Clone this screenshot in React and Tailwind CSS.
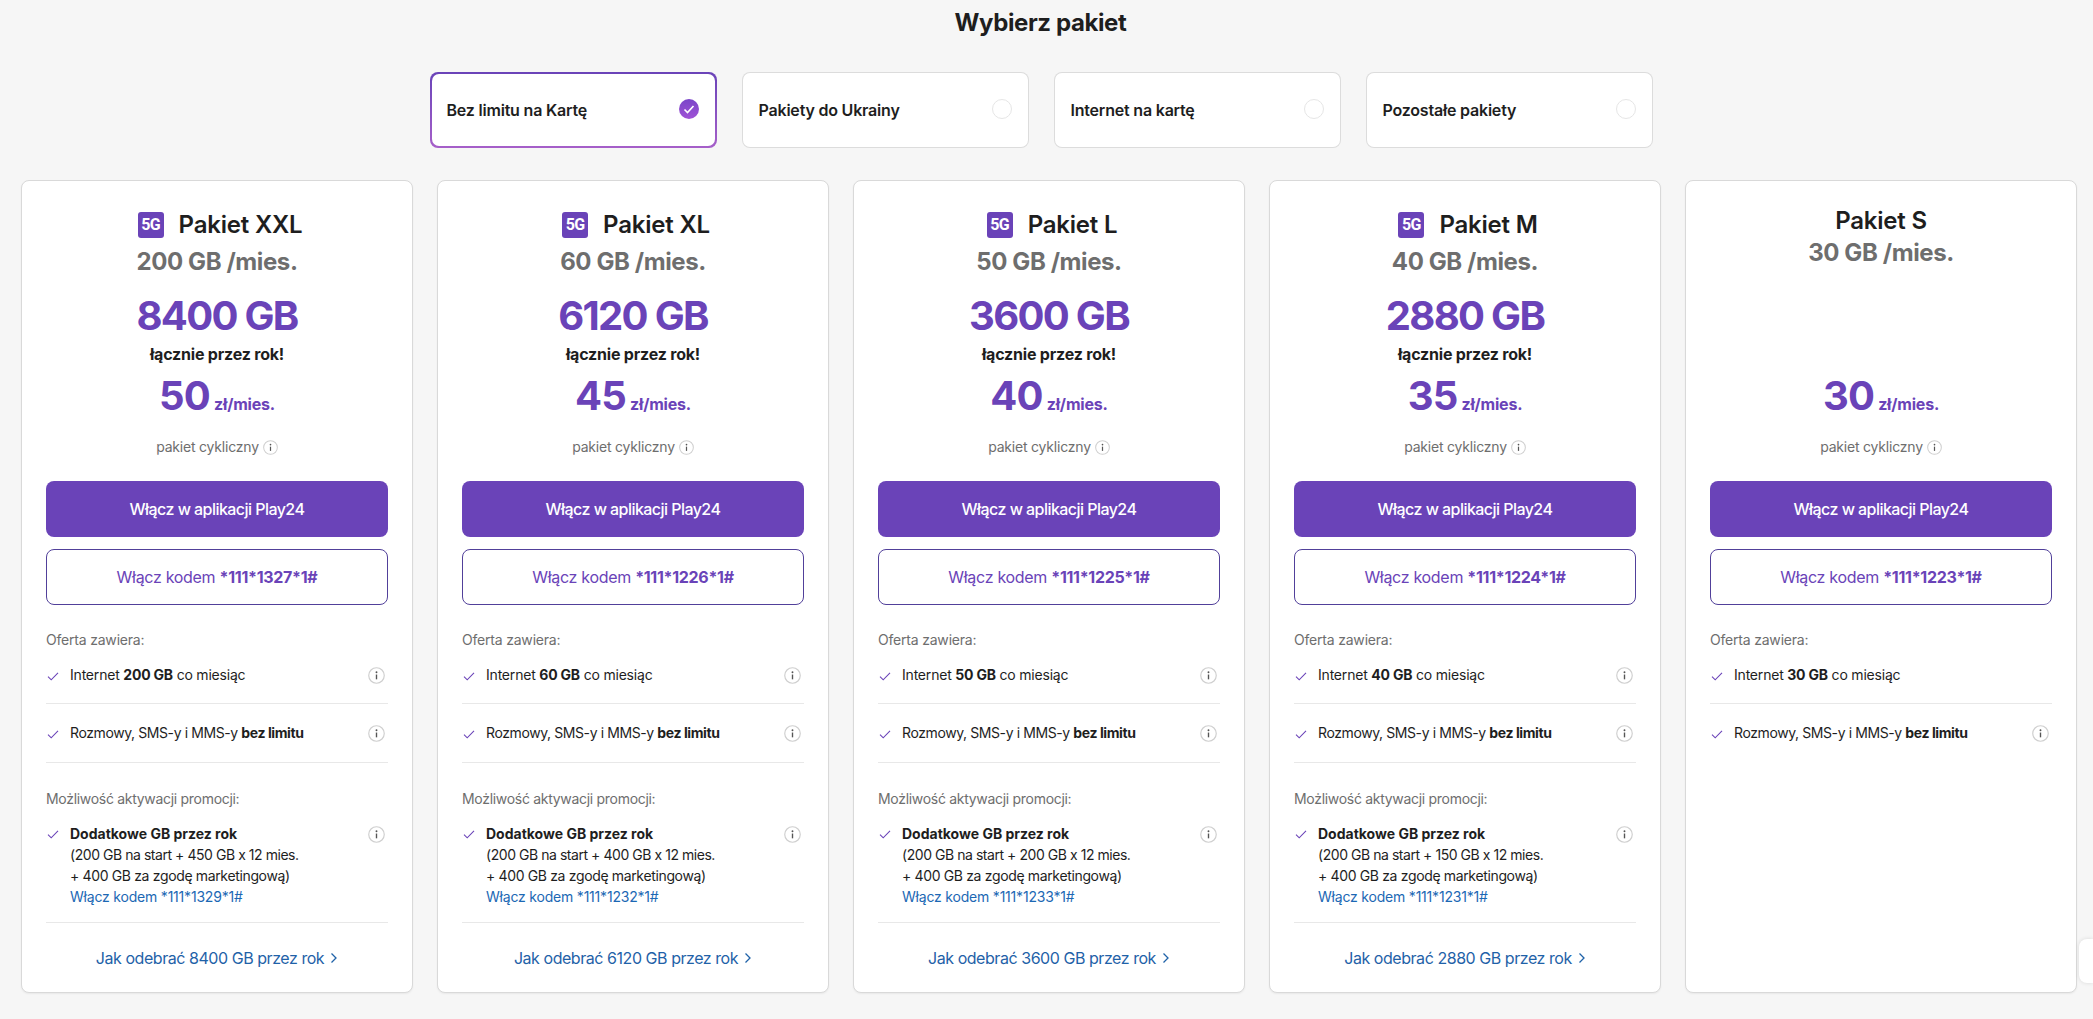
import React from 'react';

const plans = [
  { name: 'Pakiet XXL', gb: 200, total: 8400, price: 50, code: '*111*1327*1#', extra: '450', promo: '*111*1329*1#' },
  { name: 'Pakiet XL', gb: 60, total: 6120, price: 45, code: '*111*1226*1#', extra: '400', promo: '*111*1232*1#' },
  { name: 'Pakiet L', gb: 50, total: 3600, price: 40, code: '*111*1225*1#', extra: '200', promo: '*111*1233*1#' },
  { name: 'Pakiet M', gb: 40, total: 2880, price: 35, code: '*111*1224*1#', extra: '150', promo: '*111*1231*1#' },
  { name: 'Pakiet S', gb: 30, price: 30, code: '*111*1223*1#' },
];

const tabs = ['Bez limitu na Kartę', 'Pakiety do Ukrainy', 'Internet na kartę', 'Pozostałe pakiety'];

function InfoIcon({ small }) {
  return (
    <svg className={small ? 'w-[15px] h-[15px] shrink-0' : 'w-[17px] h-[17px] shrink-0'} viewBox="0 0 16 16" fill="none">
      <circle cx="8" cy="8" r="7.3" stroke="#cfcfcf" strokeWidth="1.1" />
      <circle cx="8" cy="4.9" r="0.9" fill="#555" />
      <path d="M8 7.1v4.5" stroke="#555" strokeWidth="1.3" />
    </svg>
  );
}

function Check() {
  return (
    <svg className="w-[12px] h-[12px] shrink-0 mt-[5px] ml-[1px] mr-[11px]" viewBox="0 0 12 12" fill="none">
      <path d="M1 6.6l3.2 3.2L11 2.8" stroke="#6a43b8" strokeWidth="1.1" />
    </svg>
  );
}

function Tab({ label, active }) {
  return (
    <div className={`w-[287px] h-[76px] rounded-lg ${active ? 'p-[2px] bg-gradient-to-b from-[#6a43b8] to-[#a65fc9]' : 'p-[1px] bg-[#dcdcdc]'}`}>
      <div className={`h-full bg-white rounded-[7px] flex items-center justify-between pr-[16px] ${active ? 'pl-[15px]' : 'pl-[16px]'}`}>
        <span className="text-base font-semibold tracking-[-0.2px] text-[#1e1e1e]">{label}</span>
        {active ? (
          <span className="mb-[2px] w-5 h-5 rounded-full bg-gradient-to-b from-[#7a45c8] to-[#a052d6] flex items-center justify-center">
            <svg className="w-3 h-3" viewBox="0 0 12 12" fill="none">
              <path d="M1.5 6.5l3 3L10.5 3" stroke="white" strokeWidth="1.6" />
            </svg>
          </span>
        ) : (
          <span className="mb-[2px] w-5 h-5 rounded-full border border-[#e6e6e6]" />
        )}
      </div>
    </div>
  );
}

function Plan({ plan }) {
  const has5g = !!plan.total;
  return (
    <div className="bg-white border border-[#d9d9d9] rounded-lg px-6 flex flex-col shadow-[0_1px_2px_rgba(0,0,0,0.06)]">
      <div className="h-[191px] text-center">
        {has5g ? (
          <>
            <div className="mt-[28px] pl-[6px] h-8 flex items-center justify-center gap-[15px]">
              <span className="w-[26px] h-[26px] rounded-[3px] bg-[#6a43b8] text-white text-[16px] font-bold tracking-[-0.6px] font-['Roboto',sans-serif] flex items-center justify-center">5G</span>
              <span className="text-2xl font-semibold tracking-[-0.2px] text-[#1e1e1e]">{plan.name}</span>
            </div>
            <div className="mt-[5px] text-2xl leading-8 font-bold tracking-[-0.4px] text-[#6e6e6e]">{plan.gb} GB /mies.</div>
            <div className="mt-[14px] text-[40px] leading-[48px] font-bold tracking-[-1.7px] text-[#6a43b8]">{plan.total} GB</div>
            <div className="mt-[2px] text-base leading-6 font-bold tracking-[-0.2px] text-[#1e1e1e]">łącznie przez rok!</div>
          </>
        ) : (
          <>
            <div className="mt-[24px] h-8 flex items-center justify-center text-2xl font-semibold tracking-[-0.2px] text-[#1e1e1e]">{plan.name}</div>
            <div className="text-2xl leading-8 font-bold tracking-[-0.4px] text-[#6e6e6e]">{plan.gb} GB /mies.</div>
          </>
        )}
      </div>

      <div className="h-[48px] flex items-baseline justify-center gap-[4px] text-[#6a43b8]">
        <span className="text-[40px] leading-[48px] font-bold tracking-[-0.8px]">{plan.price}</span>
        <span className="text-base font-bold tracking-[-0.2px]">zł/mies.</span>
      </div>

      <div className="mt-[17px] h-5 flex items-center justify-center gap-[4px] text-sm text-[#6e6e6e] tracking-[-0.2px]">
        pakiet cykliczny <InfoIcon small />
      </div>

      <button className="mt-[24px] h-14 rounded-lg bg-[#6a43b8] text-white text-base font-medium tracking-[-0.55px]">Włącz w aplikacji Play24</button>
      <button className="mt-3 h-14 rounded-lg border border-[#51409a] bg-white text-[#6a43b8] text-base tracking-[-0.3px]">
        Włącz kodem <b className="font-bold">{plan.code}</b>
      </button>

      <div className="mt-[25px] text-sm leading-5 text-[#6e6e6e] tracking-[-0.2px]">Oferta zawiera:</div>

      <div className="mt-[15px] flex items-start pb-[18px] border-b border-[#e8e8e8] text-sm leading-5 text-[#1e1e1e] tracking-[-0.2px]">
        <Check />
        <span className="flex-1">Internet <b className="font-bold">{plan.gb} GB</b> co miesiąc</span>
        {has5g && <span className="mr-[3px] mt-[2px]"><InfoIcon /></span>}
      </div>
      <div className={`pt-[19px] flex items-start text-sm leading-5 text-[#1e1e1e] tracking-[-0.4px] ${has5g ? 'pb-[19px] border-b border-[#e8e8e8]' : ''}`}>
        <Check />
        <span className="flex-1">Rozmowy, SMS-y i MMS-y <b className="font-bold">bez limitu</b></span>
        <span className="mr-[3px] mt-[2px]"><InfoIcon /></span>
      </div>

      {has5g && (
        <>
          <div className="mt-[26px] text-sm leading-5 text-[#6e6e6e] tracking-[-0.3px]">Możliwość aktywacji promocji:</div>
          <div className="mt-[14px] flex items-start pb-[15px] border-b border-[#e8e8e8] text-sm leading-[21px] text-[#1e1e1e] tracking-[-0.2px]">
            <Check />
            <div className="flex-1">
              <b className="font-bold tracking-normal">Dodatkowe GB przez rok</b>
              <div className="tracking-[-0.45px]">(200 GB na start + {plan.extra} GB x 12 mies.</div>
              <div className="tracking-[-0.35px]">+ 400 GB za zgodę marketingową)</div>
              <a className="text-[#1c68b4]">Włącz kodem {plan.promo}</a>
            </div>
            <span className="mr-[3px] mt-[3px]"><InfoIcon /></span>
          </div>
          <div className="flex-1 flex items-center justify-center gap-[6px] text-base text-[#1f62a8] tracking-[-0.45px]">
            Jak odebrać {plan.total} GB przez rok
            <svg className="w-[8px] h-3 mt-[1px]" viewBox="0 0 8 12" fill="none">
              <path d="M1.5 1.5L6 6l-4.5 4.5" stroke="#1f62a8" strokeWidth="1.3" />
            </svg>
          </div>
        </>
      )}
    </div>
  );
}

export default function App() {
  return (
    <div className="relative h-[1019px] overflow-hidden bg-[#f6f6f6] font-['Inter',sans-serif] pt-[7px]">
      <h1 className="pr-[12px] text-center text-2xl leading-8 font-bold tracking-[-0.4px] text-[#1e1e1e]">Wybierz pakiet</h1>

      <div className="mt-[33px] pr-[11px] flex justify-center gap-[25px]">
        {tabs.map((t, i) => (
          <Tab key={t} label={t} active={i === 0} />
        ))}
      </div>

      <div className="mt-[32px] h-[813px] pl-[21px] pr-[16px] grid grid-cols-5 gap-6">
        {plans.map((p) => (
          <Plan key={p.name} plan={p} />
        ))}
      </div>

      <div className="absolute right-0 top-[939px] w-[14px] h-[44px] bg-white rounded-l-lg shadow-[0_0_4px_rgba(0,0,0,0.12)]" />
    </div>
  );
}
